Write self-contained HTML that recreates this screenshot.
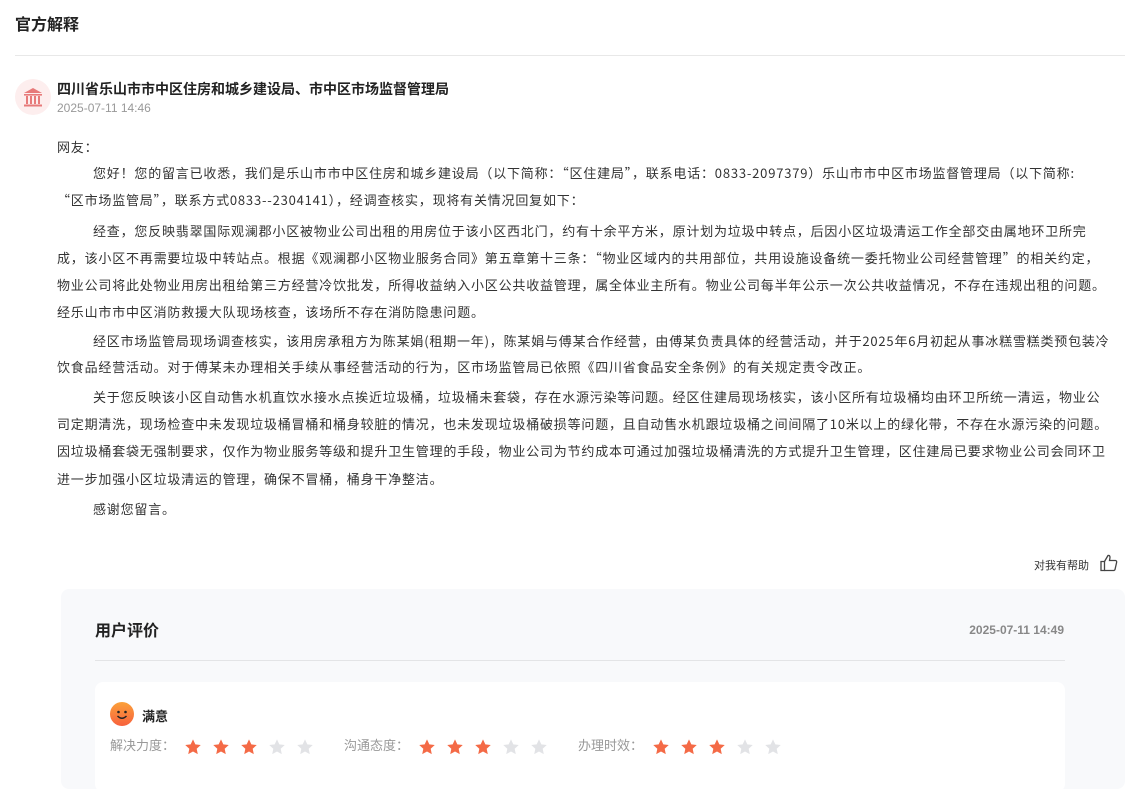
<!DOCTYPE html>
<html><head><meta charset="utf-8"><style>
*{margin:0;padding:0;box-sizing:border-box}
body{width:1133px;height:774px;overflow:hidden;background:#fff;font-family:"Liberation Sans","Noto Sans CJK SC",sans-serif;color:#333;position:relative}
.abs{position:absolute;white-space:nowrap}
.t{font-size:13px;color:#333;left:57px;letter-spacing:0.8px;font-family:"Noto Sans CJK SC","Liberation Sans",sans-serif;line-height:18px}
.i{display:inline-block;width:36px}
.sp{display:inline-block;width:9px}
.star{display:inline-block;width:18px;height:18px;vertical-align:middle;margin-right:10px}
</style></head><body>
<div class="abs" style="left:15px;top:11px;font-size:16px;font-weight:bold;color:#222">官方解释</div>
<div class="abs" style="left:15px;top:55px;width:1110px;height:1px;background:#e8e8e8"></div>
<div class="abs" style="left:15px;top:79px;width:36px;height:36px;border-radius:50%;background:#fdeeee">
<svg width="36" height="36" viewBox="0 0 36 36"><g fill="#e77a7a"><path d="M18 9 L27 14 L9 14 Z"/><rect x="9" y="15" width="18" height="1.6"/><rect x="11" y="17" width="2" height="8"/><rect x="15" y="17" width="2" height="8"/><rect x="19" y="17" width="2" height="8"/><rect x="23" y="17" width="2" height="8"/><rect x="9" y="25.5" width="18" height="2"/></g></svg></div>
<div class="abs" style="left:57px;top:79px;font-size:14px;font-weight:bold;color:#222">四川省乐山市市中区住房和城乡建设局、市中区市场监督管理局</div>
<div class="abs" style="left:57px;top:101px;font-size:12px;color:#999">2025-07-11 14:46</div>
<div class="abs t" style="top:138px">网友：</div>
<div class="abs t" style="top:164px"><span class="i"></span>您好！您的留言已收悉，我们是乐山市市中区住房和城乡建设局（以下简称：“区住建局”，联系电话：0833-2097379）乐山市市中区市场监督管理局（以下简称:</div>
<div class="abs t" style="top:191px">“区市场监管局”，联系方式0833--2304141），经调查核实，现将有关情况回复如下：</div>
<div class="abs t" style="top:222px"><span class="i"></span>经查，您反映翡翠国际观澜郡小区被物业公司出租的用房位于该小区西北门，约有十余平方米，原计划为垃圾中转点，后因小区垃圾清运工作全部交由属地环卫所完</div>
<div class="abs t" style="top:249px">成，该小区不再需要垃圾中转站点。根据《观澜郡小区物业服务合同》第五章第十三条：“物业区域内的共用部位，共用设施设备统一委托物业公司经营管理”的相关约定，</div>
<div class="abs t" style="top:276px">物业公司将此处物业用房出租给第三方经营冷饮批发，所得收益纳入小区公共收益管理，属全体业主所有。物业公司每半年公示一次公共收益情况，不存在违规出租的问题。</div>
<div class="abs t" style="top:303px">经乐山市市中区消防救援大队现场核查，该场所不存在消防隐患问题。</div>
<div class="abs t" style="top:332px"><span class="i"></span>经区市场监管局现场调查核实，该用房承租方为陈某娟(租期一年)，陈某娟与傅某合作经营，由傅某负责具体的经营活动，并于2025年6月初起从事冰糕雪糕类预包装冷</div>
<div class="abs t" style="top:358px">饮食品经营活动。对于傅某未办理相关手续从事经营活动的行为，区市场监管局已依照《四川省食品安全条例》的有关规定责令改正。</div>
<div class="abs t" style="top:388px"><span class="i"></span>关于您反映该小区自动售水机直饮水接水点挨近垃圾桶，垃圾桶未套袋，存在水源污染等问题。经区住建局现场核实，该小区所有垃圾桶均由环卫所统一清运，物业公</div>
<div class="abs t" style="top:415px">司定期清洗，现场检查中未发现垃圾桶冒桶和桶身较脏的情况，也未发现垃圾桶破损等问题，且自动售水机跟垃圾桶之间间隔了10米以上的绿化带，不存在水源污染的问题。</div>
<div class="abs t" style="top:442px">因垃圾桶套袋无强制要求，仅作为物业服务等级和提升卫生管理的手段，物业公司为节约成本可通过加强垃圾桶清洗的方式提升卫生管理，区住建局已要求物业公司会同环卫</div>
<div class="abs t" style="top:470px">进一步加强小区垃圾清运的管理，确保不冒桶，桶身干净整洁。</div>
<div class="abs t" style="top:500px"><span class="i"></span>感谢您留言。</div>
<div class="abs" style="left:1034px;top:557px;font-size:11px;color:#333">对我有帮助</div>
<svg class="abs" style="left:1099px;top:553px" width="20" height="20" viewBox="0 0 20 20" fill="none" stroke="#444" stroke-width="1.3"><path d="M2 8.5h3.5v9H2z"/><path d="M5.5 8.5 L9 2.5 Q11 2 11 4.5 L10.5 7.5 H16.5 Q18 7.8 17.6 9.5 L16 16.5 Q15.6 17.5 14.5 17.5 H5.5"/></svg>
<div class="abs" style="left:61px;top:589px;width:1064px;height:200px;border-radius:8px;background:#f8f9fb"></div>
<div class="abs" style="left:95px;top:617px;font-size:16px;font-weight:bold;color:#222">用户评价</div>
<div class="abs" style="right:69px;top:623px;font-size:12px;font-weight:bold;color:#888">2025-07-11 14:49</div>
<div class="abs" style="left:95px;top:660px;width:970px;height:1px;background:#e3e4e6"></div>
<div class="abs" style="left:95px;top:682px;width:970px;height:110px;border-radius:8px;background:#fff"></div>
<svg class="abs" style="left:110px;top:702px" width="24" height="24" viewBox="0 0 24 24"><defs><linearGradient id="g" x1="0" y1="0" x2="0" y2="1"><stop offset="0" stop-color="#fba13a"/><stop offset="1" stop-color="#f7613d"/></linearGradient></defs><circle cx="12" cy="12" r="12" fill="url(#g)"/><circle cx="8.5" cy="10" r="1.3" fill="#222"/><circle cx="15.5" cy="10" r="1.3" fill="#222"/><path d="M7.5 14 Q12 18.5 16.5 14" stroke="#222" stroke-width="1.4" fill="none"/></svg>
<div class="abs" style="left:142px;top:706px;font-size:13px;font-weight:bold;color:#222">满意</div>
<div class="abs" style="left:110px;top:736px;font-size:13px;color:#999;line-height:20px">解决力度：<span class="sp"></span><svg class="star" viewBox="0 0 20 20"><path d="M10 1.5l2.6 5.6 6 .7-4.5 4.1 1.2 6L10 15l-5.3 2.9 1.2-6L1.4 7.8l6-.7z" fill="#f46a46"/></svg><svg class="star" viewBox="0 0 20 20"><path d="M10 1.5l2.6 5.6 6 .7-4.5 4.1 1.2 6L10 15l-5.3 2.9 1.2-6L1.4 7.8l6-.7z" fill="#f46a46"/></svg><svg class="star" viewBox="0 0 20 20"><path d="M10 1.5l2.6 5.6 6 .7-4.5 4.1 1.2 6L10 15l-5.3 2.9 1.2-6L1.4 7.8l6-.7z" fill="#f46a46"/></svg><svg class="star" viewBox="0 0 20 20"><path d="M10 1.5l2.6 5.6 6 .7-4.5 4.1 1.2 6L10 15l-5.3 2.9 1.2-6L1.4 7.8l6-.7z" fill="#e2e3e6"/></svg><svg class="star" viewBox="0 0 20 20"><path d="M10 1.5l2.6 5.6 6 .7-4.5 4.1 1.2 6L10 15l-5.3 2.9 1.2-6L1.4 7.8l6-.7z" fill="#e2e3e6"/></svg></div>
<div class="abs" style="left:344px;top:736px;font-size:13px;color:#999;line-height:20px">沟通态度：<span class="sp"></span><svg class="star" viewBox="0 0 20 20"><path d="M10 1.5l2.6 5.6 6 .7-4.5 4.1 1.2 6L10 15l-5.3 2.9 1.2-6L1.4 7.8l6-.7z" fill="#f46a46"/></svg><svg class="star" viewBox="0 0 20 20"><path d="M10 1.5l2.6 5.6 6 .7-4.5 4.1 1.2 6L10 15l-5.3 2.9 1.2-6L1.4 7.8l6-.7z" fill="#f46a46"/></svg><svg class="star" viewBox="0 0 20 20"><path d="M10 1.5l2.6 5.6 6 .7-4.5 4.1 1.2 6L10 15l-5.3 2.9 1.2-6L1.4 7.8l6-.7z" fill="#f46a46"/></svg><svg class="star" viewBox="0 0 20 20"><path d="M10 1.5l2.6 5.6 6 .7-4.5 4.1 1.2 6L10 15l-5.3 2.9 1.2-6L1.4 7.8l6-.7z" fill="#e2e3e6"/></svg><svg class="star" viewBox="0 0 20 20"><path d="M10 1.5l2.6 5.6 6 .7-4.5 4.1 1.2 6L10 15l-5.3 2.9 1.2-6L1.4 7.8l6-.7z" fill="#e2e3e6"/></svg></div>
<div class="abs" style="left:578px;top:736px;font-size:13px;color:#999;line-height:20px">办理时效：<span class="sp"></span><svg class="star" viewBox="0 0 20 20"><path d="M10 1.5l2.6 5.6 6 .7-4.5 4.1 1.2 6L10 15l-5.3 2.9 1.2-6L1.4 7.8l6-.7z" fill="#f46a46"/></svg><svg class="star" viewBox="0 0 20 20"><path d="M10 1.5l2.6 5.6 6 .7-4.5 4.1 1.2 6L10 15l-5.3 2.9 1.2-6L1.4 7.8l6-.7z" fill="#f46a46"/></svg><svg class="star" viewBox="0 0 20 20"><path d="M10 1.5l2.6 5.6 6 .7-4.5 4.1 1.2 6L10 15l-5.3 2.9 1.2-6L1.4 7.8l6-.7z" fill="#f46a46"/></svg><svg class="star" viewBox="0 0 20 20"><path d="M10 1.5l2.6 5.6 6 .7-4.5 4.1 1.2 6L10 15l-5.3 2.9 1.2-6L1.4 7.8l6-.7z" fill="#e2e3e6"/></svg><svg class="star" viewBox="0 0 20 20"><path d="M10 1.5l2.6 5.6 6 .7-4.5 4.1 1.2 6L10 15l-5.3 2.9 1.2-6L1.4 7.8l6-.7z" fill="#e2e3e6"/></svg></div>
</body></html>
